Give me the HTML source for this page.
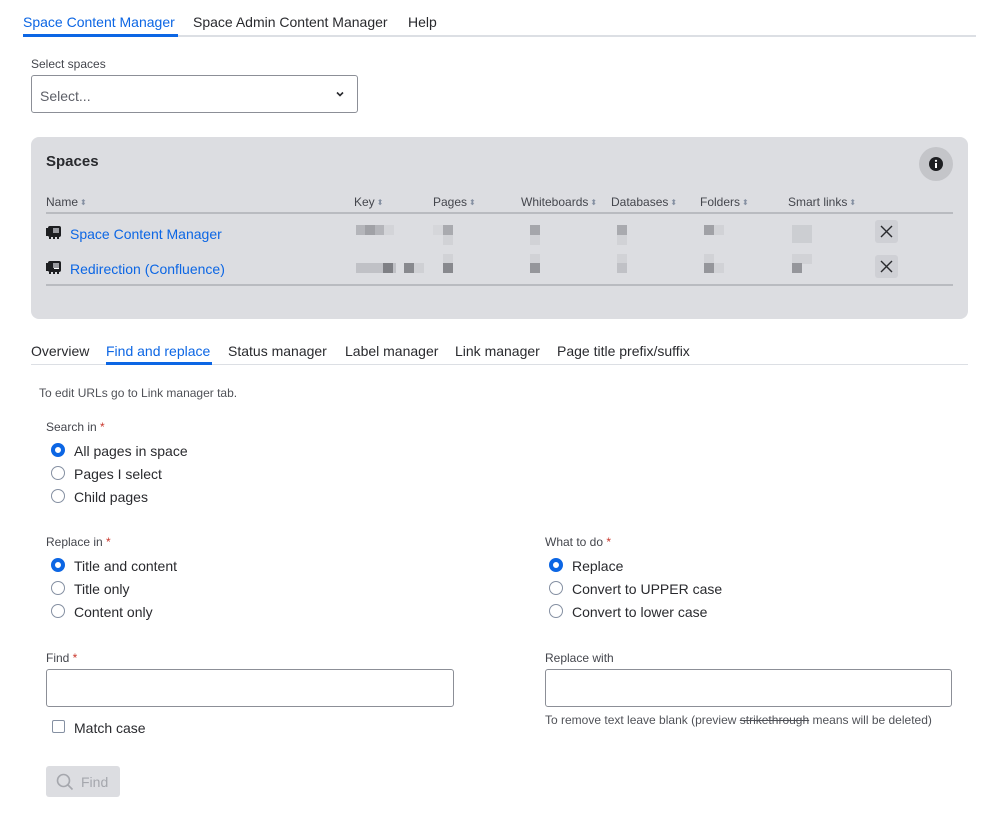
<!DOCTYPE html>
<html><head><meta charset="utf-8">
<style>
*{box-sizing:border-box;margin:0;padding:0}
body{width:999px;height:817px;background:#fff;font-family:"Liberation Sans",sans-serif;color:#292a2e;position:relative;overflow:hidden}
.a{position:absolute;white-space:nowrap}
.t14{font-size:14px}
.lbl{font-size:12px;color:#44464d}
.req{color:#c9372c}
.blue{color:#0c66e4}
.radio{position:absolute;width:14px;height:14px;border:1px solid #8590a2;border-radius:50%;background:#fff}
.radio.on{border:4px solid #0c66e4;background:#fff}
.th{font-size:12px;color:#44464d}
.sort{display:inline-block;font-size:8px;color:#8590a2;margin-left:2px;vertical-align:1px}
.px{position:absolute;width:10px;height:10px}
.x{position:absolute;width:23px;height:23px;background:#cfd0d5;border-radius:3px}
.input{position:absolute;border:1px solid #8c8f97;border-radius:3px;background:#fff}
</style></head><body>

<div class="a t14 blue" style="left:23px;top:14px;">Space Content Manager</div>
<div class="a t14" style="left:193px;top:14px;">Space Admin Content Manager</div>
<div class="a t14" style="left:408px;top:14px;">Help</div>
<div class="a" style="left:23px;top:35px;width:953px;height:2px;background:#dcdfe4"></div>
<div class="a" style="left:23px;top:34px;width:155px;height:3px;background:#0c66e4"></div>

<div class="a lbl" style="left:31px;top:57px;">Select spaces</div>
<div class="input" style="left:31px;top:75px;width:327px;height:38px;"></div>
<div class="a t14" style="left:40px;top:88px;color:#5e6068">Select...</div>
<svg class="a" style="left:335px;top:90px" width="10" height="8" viewBox="0 0 10 8"><path d="M2 2.5l3 3 3-3" stroke="#292a2e" stroke-width="1.6" fill="none"/></svg>

<div class="a" style="left:31px;top:137px;width:937px;height:182px;background:#dcdde1;border-radius:8px"></div>
<div class="a" style="left:46px;top:153px;font-size:15px;font-weight:bold">Spaces</div>
<div class="a" style="left:919px;top:147px;width:34px;height:34px;border-radius:50%;background:#c4c5c9"></div>
<svg class="a" style="left:928px;top:156px" width="16" height="16" viewBox="0 0 16 16"><circle cx="8" cy="8" r="7" fill="#1d1e21"/><rect x="7" y="7" width="2" height="5" fill="#fff"/><circle cx="8" cy="4.8" r="1.1" fill="#fff"/></svg>

<div class="a th" style="left:46px;top:195px">Name<span class="sort">⬍</span></div>
<div class="a th" style="left:354px;top:195px">Key<span class="sort">⬍</span></div>
<div class="a th" style="left:433px;top:195px">Pages<span class="sort">⬍</span></div>
<div class="a th" style="left:521px;top:195px">Whiteboards<span class="sort">⬍</span></div>
<div class="a th" style="left:611px;top:195px">Databases<span class="sort">⬍</span></div>
<div class="a th" style="left:700px;top:195px">Folders<span class="sort">⬍</span></div>
<div class="a th" style="left:788px;top:195px">Smart links<span class="sort">⬍</span></div>
<div class="a" style="left:46px;top:212px;width:907px;height:2px;background:#b9bbc0"></div>
<div class="a" style="left:46px;top:284px;width:907px;height:2px;background:#b9bbc0"></div>

<svg class="a" style="left:46px;top:224px" width="16" height="16" viewBox="0 0 16 16"><rect x="2" y="2" width="13" height="11" rx="2" fill="#1d1e21"/><rect x="0" y="4" width="3" height="8" fill="#1d1e21"/><rect x="7" y="4" width="6" height="5" fill="#9a9ba0"/><rect x="3" y="13" width="2" height="2" fill="#1d1e21"/><rect x="7" y="13" width="2" height="2" fill="#1d1e21"/><rect x="11" y="13" width="2" height="2" fill="#1d1e21"/></svg>
<div class="a t14 blue" style="left:70px;top:226px">Space Content Manager</div>
<svg class="a" style="left:46px;top:259px" width="16" height="16" viewBox="0 0 16 16"><rect x="2" y="2" width="13" height="11" rx="2" fill="#1d1e21"/><rect x="0" y="4" width="3" height="8" fill="#1d1e21"/><rect x="7" y="4" width="6" height="5" fill="#9a9ba0"/><rect x="8" y="9" width="5" height="1" fill="#fff"/><rect x="3" y="13" width="2" height="2" fill="#1d1e21"/><rect x="7" y="13" width="2" height="2" fill="#1d1e21"/><rect x="11" y="13" width="2" height="2" fill="#1d1e21"/></svg>
<div class="a t14 blue" style="left:70px;top:261px">Redirection (Confluence)</div>

<!-- pixel blobs row1 -->
<div class="px" style="left:356px;top:225px;width:28px;background:#b4b5ba"></div>
<div class="px" style="left:365px;top:225px;background:#a0a1a6"></div>
<div class="px" style="left:384px;top:225px;background:#d3d4d8"></div>
<div class="px" style="left:443px;top:225px;background:#a9aaaf"></div>
<div class="px" style="left:443px;top:235px;background:#d1d2d6"></div>
<div class="px" style="left:433px;top:225px;background:#d5d6da"></div>
<div class="px" style="left:530px;top:225px;background:#a5a6ab"></div>
<div class="px" style="left:530px;top:235px;background:#d1d2d6"></div>
<div class="px" style="left:617px;top:225px;background:#a9aaaf"></div>
<div class="px" style="left:617px;top:235px;background:#d1d2d6"></div>
<div class="px" style="left:704px;top:225px;background:#a0a1a6"></div>
<div class="px" style="left:714px;top:225px;background:#d1d2d6"></div>
<div class="px" style="left:792px;top:225px;width:20px;height:18px;background:#ccced2"></div>
<!-- row2 -->
<div class="px" style="left:356px;top:263px;width:40px;background:#c0c1c6"></div>
<div class="px" style="left:383px;top:263px;background:#7f8085"></div>
<div class="px" style="left:404px;top:263px;background:#88898e"></div>
<div class="px" style="left:414px;top:263px;background:#cfd0d4"></div>
<div class="px" style="left:443px;top:254px;background:#d1d2d6"></div>
<div class="px" style="left:443px;top:263px;background:#88898e"></div>
<div class="px" style="left:530px;top:254px;background:#d1d2d6"></div>
<div class="px" style="left:530px;top:263px;background:#95969b"></div>
<div class="px" style="left:617px;top:254px;background:#d1d2d6"></div>
<div class="px" style="left:617px;top:263px;background:#c0c1c6"></div>
<div class="px" style="left:704px;top:254px;background:#d1d2d6"></div>
<div class="px" style="left:704px;top:263px;background:#95969b"></div>
<div class="px" style="left:714px;top:263px;background:#d1d2d6"></div>
<div class="px" style="left:792px;top:254px;width:20px;background:#d1d2d6"></div>
<div class="px" style="left:792px;top:263px;background:#95969b"></div>

<div class="x" style="left:875px;top:220px"></div>
<svg class="a" style="left:880px;top:225px" width="13" height="13" viewBox="0 0 13 13"><path d="M1 1l11 11M12 1L1 12" stroke="#292a2e" stroke-width="1.4"/></svg>
<div class="x" style="left:875px;top:255px"></div>
<svg class="a" style="left:880px;top:260px" width="13" height="13" viewBox="0 0 13 13"><path d="M1 1l11 11M12 1L1 12" stroke="#292a2e" stroke-width="1.4"/></svg>

<div class="a t14" style="left:31px;top:343px">Overview</div>
<div class="a t14 blue" style="left:106px;top:343px">Find and replace</div>
<div class="a t14" style="left:228px;top:343px">Status manager</div>
<div class="a t14" style="left:345px;top:343px">Label manager</div>
<div class="a t14" style="left:455px;top:343px">Link manager</div>
<div class="a t14" style="left:557px;top:343px">Page title prefix/suffix</div>
<div class="a" style="left:31px;top:364px;width:937px;height:1px;background:#dcdfe4"></div>
<div class="a" style="left:106px;top:362px;width:106px;height:3px;background:#0c66e4"></div>

<div class="a" style="left:39px;top:386px;font-size:12px;color:#505258">To edit URLs go to Link manager tab.</div>

<div class="a lbl" style="left:46px;top:420px">Search in<span class="req"> *</span></div>
<div class="radio on" style="left:51px;top:443px"></div><div class="a t14" style="left:74px;top:443px">All pages in space</div>
<div class="radio" style="left:51px;top:466px"></div><div class="a t14" style="left:74px;top:466px">Pages I select</div>
<div class="radio" style="left:51px;top:489px"></div><div class="a t14" style="left:74px;top:489px">Child pages</div>

<div class="a lbl" style="left:46px;top:535px">Replace in<span class="req"> *</span></div>
<div class="radio on" style="left:51px;top:558px"></div><div class="a t14" style="left:74px;top:558px">Title and content</div>
<div class="radio" style="left:51px;top:581px"></div><div class="a t14" style="left:74px;top:581px">Title only</div>
<div class="radio" style="left:51px;top:604px"></div><div class="a t14" style="left:74px;top:604px">Content only</div>

<div class="a lbl" style="left:545px;top:535px">What to do<span class="req"> *</span></div>
<div class="radio on" style="left:549px;top:558px"></div><div class="a t14" style="left:572px;top:558px">Replace</div>
<div class="radio" style="left:549px;top:581px"></div><div class="a t14" style="left:572px;top:581px">Convert to UPPER case</div>
<div class="radio" style="left:549px;top:604px"></div><div class="a t14" style="left:572px;top:604px">Convert to lower case</div>

<div class="a lbl" style="left:46px;top:651px">Find<span class="req"> *</span></div>
<div class="input" style="left:46px;top:669px;width:408px;height:38px"></div>
<div class="a" style="left:52px;top:720px;width:13px;height:13px;border:1px solid #8590a2;border-radius:2px"></div>
<div class="a t14" style="left:74px;top:720px">Match case</div>

<div class="a lbl" style="left:545px;top:651px">Replace with</div>
<div class="input" style="left:545px;top:669px;width:407px;height:38px"></div>
<div class="a" style="left:545px;top:713px;font-size:12px;color:#505258">To remove text leave blank (preview <s>strikethrough</s> means will be deleted)</div>

<div class="a" style="left:46px;top:766px;width:74px;height:31px;background:#dcdde1;border-radius:3px"></div>
<svg class="a" style="left:56px;top:773px" width="18" height="18" viewBox="0 0 18 18"><circle cx="7.5" cy="7.5" r="6" stroke="#a5a7ad" stroke-width="1.6" fill="none"/><path d="M12 12l4.5 4.5" stroke="#a5a7ad" stroke-width="1.6"/></svg>
<div class="a t14" style="left:81px;top:774px;color:#a5a7ad">Find</div>

</body></html>
